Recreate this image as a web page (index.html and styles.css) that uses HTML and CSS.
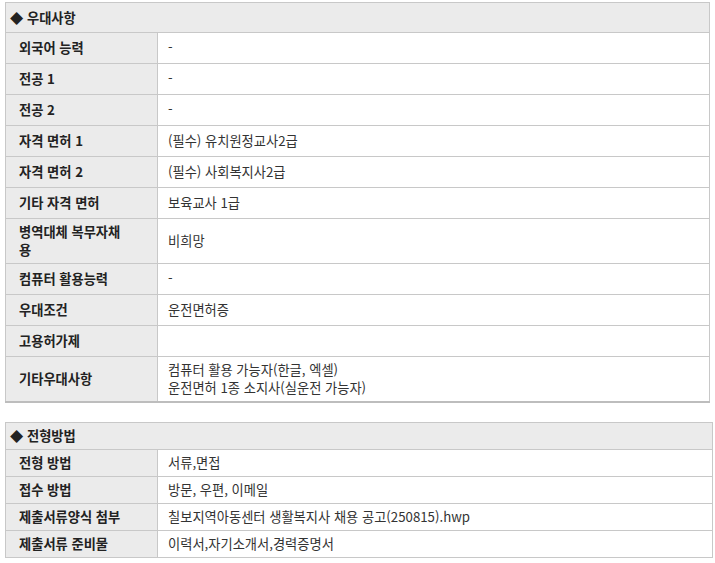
FILE: index.html
```html
<!DOCTYPE html>
<html lang="ko">
<head>
<meta charset="utf-8">
<link rel="stylesheet" href="styles.css">
</head>
<body>
<div class="page">
  <table class="info info-first">
    <colgroup><col class="c-label"><col></colgroup>
    <tr><th class="sec" colspan="2">◆ 우대사항</th></tr>
    <tr><th>외국어 능력</th><td>-</td></tr>
    <tr><th>전공 1</th><td>-</td></tr>
    <tr><th>전공 2</th><td>-</td></tr>
    <tr><th>자격 면허 1</th><td>(필수) 유치원정교사2급</td></tr>
    <tr><th>자격 면허 2</th><td>(필수) 사회복지사2급</td></tr>
    <tr><th>기타 자격 면허</th><td>보육교사 1급</td></tr>
    <tr><th>병역대체 복무자채<br>용</th><td>비희망</td></tr>
    <tr><th>컴퓨터 활용능력</th><td>-</td></tr>
    <tr><th>우대조건</th><td>운전면허증</td></tr>
    <tr><th>고용허가제</th><td></td></tr>
    <tr><th>기타우대사항</th><td>컴퓨터 활용 가능자(한글, 엑셀)<br>운전면허 1종 소지사(실운전 가능자)</td></tr>
  </table>

  <table class="info info-second">
    <colgroup><col class="c-label"><col></colgroup>
    <tr><th class="sec" colspan="2">◆ 전형방법</th></tr>
    <tr><th>전형 방법</th><td>서류,면접</td></tr>
    <tr><th>접수 방법</th><td>방문, 우편, 이메일</td></tr>
    <tr><th>제출서류양식 첨부</th><td>칠보지역아동센터 생활복지사 채용 공고(250815).hwp</td></tr>
    <tr><th>제출서류 준비물</th><td>이력서,자기소개서,경력증명서</td></tr>
  </table>
</div>
</body>
</html>
```

FILE: styles.css
```css
html, body {
  margin: 0;
  padding: 0;
  background: #ffffff;
}

body {
  font-family: "Noto Sans CJK KR", "Noto Sans", sans-serif;
  font-size: 13.25px;
  color: #222222;
}

.page {
  padding: 2px 0 0 5px;
}

.info {
  border-collapse: collapse;
  table-layout: fixed;
}

.info-first {
  width: 705px;
}

.info-second {
  width: 708px;
  margin-top: 19px;
}

.c-label {
  width: 152px;
}

.info th,
.info td {
  border: 1px solid #c8c8c8;
  line-height: 18px;
  height: 22px;
  vertical-align: middle;
  text-align: left;
  padding-top: 4px;
  padding-bottom: 4px;
}

.info th {
  background: #ebebeb;
  font-weight: bold;
  color: #222222;
  padding-left: 13px;
  padding-right: 8px;
}

.info td {
  background: #ffffff;
  font-weight: normal;
  color: #333333;
  padding-left: 10px;
  padding-right: 8px;
}

.info th.sec {
  height: 21px;
  padding-left: 4px;
}

.info-second th,
.info-second td {
  height: 18px;
}

.info-second th.sec {
  height: 18px;
}

.info-first tr:last-child th,
.info-first tr:last-child td {
  border-bottom: 2px solid #bdbdbd;
}
```
